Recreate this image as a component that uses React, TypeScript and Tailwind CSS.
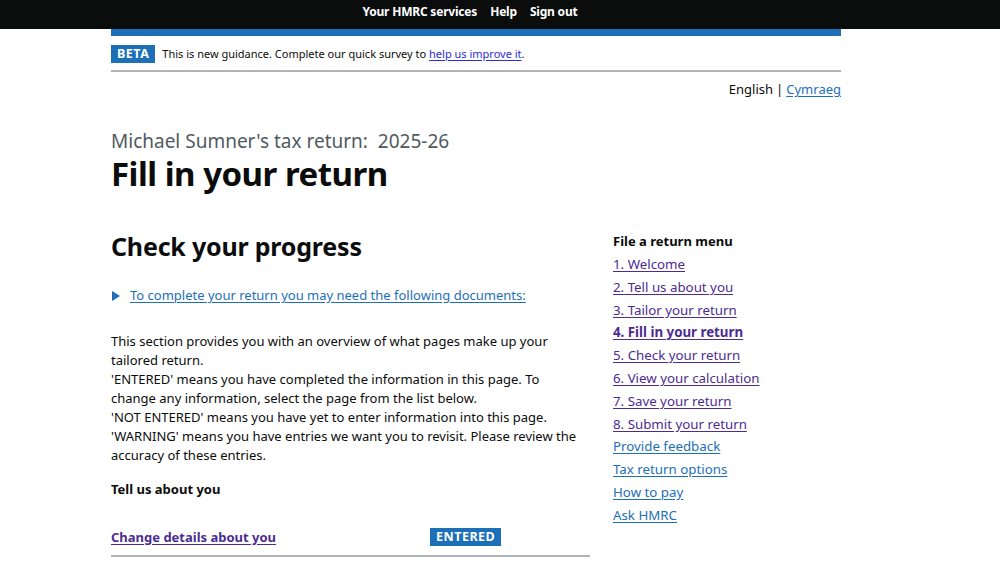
import React from "react";

export default function App() {
  const menu = [
    { t: "1. Welcome", v: true },
    { t: "2. Tell us about you", v: true },
    { t: "3. Tailor your return", v: true },
    { t: "4. Fill in your return", v: true, b: true },
    { t: "5. Check your return", v: true },
    { t: "6. View your calculation", v: true },
    { t: "7. Save your return", v: true },
    { t: "8. Submit your return", v: true },
    { t: "Provide feedback" },
    { t: "Tax return options" },
    { t: "How to pay" },
    { t: "Ask HMRC" },
  ];
  return (
    <div className="w-[1000px] h-[565px] overflow-hidden bg-white text-[#0b0c0c] font-['Noto_Sans',_'Liberation_Sans',_Arial,_sans-serif]">
      <header className="bg-[#0b0c0c] h-[29px]">
        <nav className="w-[730px] ml-[111px] flex justify-center gap-[13px] pt-[3px] pr-[12px] text-white text-[12px] font-bold leading-[17px] tracking-[-0.2px]">
          <span>Your HMRC services</span>
          <span>Help</span>
          <span>Sign out</span>
        </nav>
      </header>
      <div className="w-[730px] ml-[111px]">
        <div className="h-[7px] bg-[#1d70b8]" />
        <div className="h-[36px] border-b-2 border-[#b1b4b6] flex items-center gap-[7px] text-[11px] pt-[2px]">
          <span className="bg-[#1d70b8] text-white font-bold text-[12.5px] tracking-[0.5px] px-[6px] h-[18px] leading-[18px]">BETA</span>
          <span>
            This is new guidance. Complete our quick survey to{" "}
            <a className="text-[#2b2bd9] underline underline-offset-2">help us improve it</a>.
          </span>
        </div>
        <div className="flex justify-end pt-[8px] text-[13px] leading-[19px]">
          <span>English</span>
          <span className="mx-[3px]">|</span>
          <a className="text-[#1d70b8] underline underline-offset-2">Cymraeg</a>
        </div>
        <div className="mt-[30px] text-[#505a5f] text-[19px] leading-[24px]">Michael Sumner's tax return:&nbsp; 2025-26</div>
        <h1 className="text-[33px] font-bold leading-[42px] tracking-[-0.5px]">Fill in your return</h1>
        <div className="flex mt-[32px]">
          <div className="w-[479px]">
            <h2 className="text-[25px] font-bold leading-[30px] mt-[4px] tracking-[-0.2px]">Check your progress</h2>
            <div className="flex items-center mt-[25px] text-[13px] leading-[19px] text-[#1d70b8]">
              <svg width="10" height="10" viewBox="0 0 10 10" className="ml-[0px] mr-[9px]"><path d="M1 0 L9 5 L1 10 Z" fill="#1d70b8" /></svg>
              <a className="underline underline-offset-2">To complete your return you may need the following documents:</a>
            </div>
            <p className="mt-[27px] w-[474px] text-[13px] leading-[19px]">
              This section provides you with an overview of what pages make up your tailored return.<br />
              'ENTERED' means you have completed the information in this page. To change any information, select the page from the list below.<br />
              'NOT ENTERED' means you have yet to enter information into this page.<br />
              'WARNING' means you have entries we want you to revisit. Please review the accuracy of these entries.
            </p>
            <div className="mt-[15px] text-[13px] leading-[19px] font-bold">Tell us about you</div>
            <div className="mt-[25px] flex items-center h-[26px] border-b-2 border-[#b1b4b6] pb-[5px] box-content">
              <a className="w-[319px] text-[#4c2c92] font-bold underline underline-offset-2 text-[13px] leading-[19px]">Change details about you</a>
              <span className="bg-[#1d70b8] text-white font-bold text-[12.5px] tracking-[0.5px] px-[6px] h-[18px] leading-[18px]">ENTERED</span>
            </div>
          </div>
          <div className="ml-[23px] w-[228px] text-[13.3px] leading-[19px]">
            <div className="font-bold mt-[5px] text-[13px]">File a return menu</div>
            <ul className="flex flex-col gap-[3.8px] mt-[4px]">
              {menu.map((m) => (
                <li key={m.t}>
                  <a className={`underline underline-offset-2 ${m.v ? "text-[#4c2c92]" : "text-[#1d70b8]"} ${m.b ? "font-bold" : ""}`}>{m.t}</a>
                </li>
              ))}
            </ul>
          </div>
        </div>
      </div>
    </div>
  );
}
